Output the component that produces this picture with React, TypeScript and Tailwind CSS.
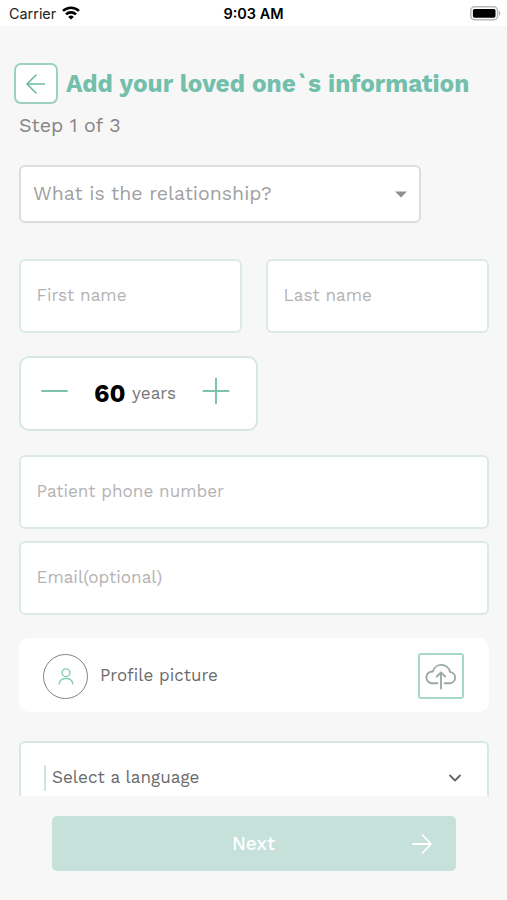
import type { ReactNode } from "react"

interface FieldProps {
  label: string
  className?: string
}

function StatusBar() {
  return (
    <header className="flex h-[26px] shrink-0 items-center bg-white font-['Inter',sans-serif] text-black">
      <div className="flex flex-1 items-center gap-[6px] pl-[9px] pt-0.5">
        <span className="w-[47px] text-[14.4px] leading-none text-[#222]">Carrier</span>
        <svg width="18" height="14" viewBox="0 0 18 14" fill="none" stroke="#000" strokeWidth="2.6" className="-mt-0.5">
          <path d="M1 4.9a11.6 11.6 0 0 1 16 0" />
          <path d="M4 8.4a7.2 7.2 0 0 1 10 0" />
          <path d="M9 13.6 6.2 10.9a4 4 0 0 1 5.6 0z" fill="#000" stroke="none" />
        </svg>
      </div>
      <span className="pt-0.5 text-[14.5px] font-semibold leading-none">9:03 AM</span>
      <div className="flex flex-1 justify-end pl-[3px] pr-[6px]">
        <svg width="31" height="15" viewBox="0 0 31 15">
          <rect x="0.8" y="0.8" width="26.8" height="13" rx="3.8" fill="#fff" stroke="#b9b9b9" strokeWidth="1.5" />
          <rect x="2.9" y="2.9" width="22.6" height="8.8" rx="1.6" fill="#000" />
          <path d="M29 5v4.6c1.8-.8 1.8-3.8 0-4.6z" fill="#aaa" />
        </svg>
      </div>
    </header>
  )
}

function Field({ label, className = "" }: FieldProps) {
  return (
    <div className={`flex h-[74px] items-center rounded-md border-2 border-[#dceae6] bg-white px-[15.5px] ${className}`}>
      <span className="text-[17.1px] leading-none text-[#b3b3b3]">{label}</span>
    </div>
  )
}

function IconButton({ label, className = "", children }: { label: string; className?: string; children: ReactNode }) {
  return (
    <button aria-label={label} className={`flex shrink-0 items-center justify-center ${className}`}>
      {children}
    </button>
  )
}

export default function App() {
  return (
    <div className="flex h-[900px] w-[507px] flex-col overflow-hidden bg-[#f7f7f7] font-['Work_Sans','Inter',sans-serif]">
      <StatusBar />

      <main className="min-h-0 flex-1 overflow-hidden pl-[19px] pr-[18px] pt-[37px]">
        {/* Heading */}
        <div className="-ml-[5px] flex items-center">
          <IconButton label="Back" className="h-[41px] w-[44px] rounded-[7px] border-2 border-[#9dd1c2] bg-white">
            <svg width="20" height="20" viewBox="0 0 20 20" fill="none" stroke="#6fbaa5" strokeWidth="1.6" strokeLinecap="round" strokeLinejoin="round">
              <path d="M18.5 10H1M10 1 1 10l9 9" />
            </svg>
          </IconButton>
          <h1 className="ml-2 whitespace-nowrap pt-0.5 text-[24.4px] font-bold leading-none text-[#73bfab]">
            Add your loved one`s information
          </h1>
        </div>
        <p className="mt-3 text-[19.6px] leading-[20px] text-[#858585]">Step 1 of 3</p>

        {/* Relationship */}
        <div className="mt-[29px] flex h-[58px] w-[402px] items-center justify-between rounded-md border-2 border-[#dcdedd] bg-white pl-3 pr-[12.5px]">
          <span className="text-[19.5px] leading-none text-[#a0a0a0]">What is the relationship?</span>
          <svg width="12" height="7" viewBox="0 0 12 7" fill="#909090">
            <path d="M0 .5h12L6 6.5z" />
          </svg>
        </div>

        <div className="mt-[36px] flex gap-6">
          <Field label="First name" className="flex-1" />
          <Field label="Last name" className="flex-1" />
        </div>

        {/* Age */}
        <div className="mt-[23px] flex h-[75px] w-[239px] items-center rounded-[10px] border-2 border-[#d7e8e2] bg-white pl-5">
          <IconButton label="Decrease age" className="mb-1.5">
            <svg width="27" height="28" viewBox="0 0 27 28" stroke="#7cc2af" strokeWidth="2" strokeLinecap="round">
              <path d="M1 14h25" />
            </svg>
          </IconButton>
          <span className="ml-[26px] w-[38px] text-[25px] font-bold leading-none text-black">60</span>
          <span className="w-[70px] text-[17.1px] leading-none text-[#777]">years</span>
          <IconButton label="Increase age" className="mb-1.5">
            <svg width="28" height="28" viewBox="0 0 28 28" stroke="#7cc2af" strokeWidth="2" strokeLinecap="round">
              <path d="M1.5 14h25M14 1.5v25" />
            </svg>
          </IconButton>
        </div>

        <Field label="Patient phone number" className="mt-6" />
        <Field label="Email(optional)" className="mt-3" />

        {/* Profile picture */}
        <div className="mt-[23px] flex h-[74px] items-center rounded-[10px] bg-white pl-6 pr-[25px]">
          <div className="mt-0.5 flex h-[45px] w-[45px] items-center justify-center rounded-full border border-[#848484]">
            <svg width="16" height="17" viewBox="0 0 16 17" fill="none" stroke="#87cdb9" strokeWidth="1.4" strokeLinecap="round">
              <circle cx="8" cy="4.8" r="3.9" />
              <path d="M1.2 15.8c1-7 12.6-7 13.6 0" />
            </svg>
          </div>
          <span className="ml-3 flex-1 text-[17px] leading-none text-[#6b6b6b]">Profile picture</span>
          <IconButton label="Upload" className="mt-0.5 h-[46px] w-[46px] rounded-[3px] border-2 border-[#a9d7ca]">
            <svg width="34" height="27" viewBox="0 0 32 26" fill="none" stroke="#9aa9a6" strokeWidth="1.8" strokeLinecap="round" strokeLinejoin="round" className="shrink-0">
              <path d="M12.5 19.5H7A5.6 5.6 0 0 1 8.2 8.2 8.4 8.4 0 0 1 24.6 8.6 5.5 5.5 0 0 1 25 19.5h-5.5" />
              <path d="M16 24.5V9.4M12 13l4-4 4 4" />
            </svg>
          </IconButton>
        </div>

        {/* Language */}
        <div className="mt-[29px] flex h-[74px] items-center rounded-md border-2 border-[#d7e8e2] bg-white pl-[23px] pr-[26px]">
          <span className="h-[26px] w-[2px] bg-[#cfe6df]" />
          <span className="ml-1.5 flex-1 text-[17.1px] leading-none text-[#6b6b6b]">Select a language</span>
          <svg width="12" height="8" viewBox="0 0 12 8" fill="none" stroke="#666" strokeWidth="1.8" strokeLinecap="round" strokeLinejoin="round">
            <path d="m1 1.5 5 5 5-5" />
          </svg>
        </div>
      </main>

      <footer className="h-[104px] shrink-0 bg-[#f7f7f7] pl-[52px] pr-[51px] pt-5">
        <button className="flex h-[55px] w-full items-center rounded-[5px] bg-[#c5e1da] pl-[180px] pr-6 text-white">
          <span className="flex-1 text-left text-[19px] font-medium leading-none">Next</span>
          <svg width="20" height="20" viewBox="0 0 20 20" fill="none" stroke="#fff" strokeWidth="1.8" strokeLinecap="round" strokeLinejoin="round">
            <path d="M1 10h18M10.5 1l8.5 9-8.5 9" />
          </svg>
        </button>
      </footer>
    </div>
  )
}
